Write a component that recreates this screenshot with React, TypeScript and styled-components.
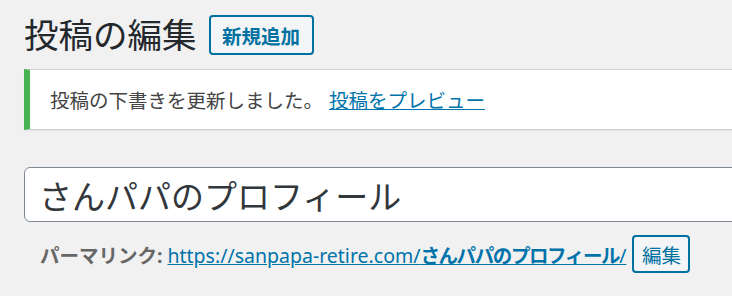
import React from 'react'
import styled, { createGlobalStyle } from 'styled-components'

const GlobalStyle = createGlobalStyle`
    html, body {
        margin: 0;
        padding: 0;
        background: #f1f1f1;
        overflow: hidden;
    }
    body {
        font-family: 'Noto Sans', 'Noto Sans CJK JP', sans-serif;
        color: #444;
    }
`

const Wrap = styled.div`
    padding: 15px 0 0 24px;
    margin-right: -60px;
`

const HeadingRow = styled.div`
    display: flex;
    align-items: center;
    gap: 12px;
`

const PageTitle = styled.h1`
    margin: 0;
    font-size: 34.5px;
    font-weight: 400;
    line-height: 40px;
    color: #23282d;
`

const TitleAction = styled.a`
    display: inline-flex;
    align-items: center;
    justify-content: center;
    box-sizing: border-box;
    height: 40px;
    width: 105px;
    border: 2px solid #0071a1;
    border-radius: 4px;
    background: #f3f5f6;
    color: #0071a1;
    font-size: 19.5px;
    font-weight: 700;
    text-decoration: none;
`

const Notice = styled.div`
    box-sizing: border-box;
    margin-top: 14px;
    height: 61px;
    display: flex;
    align-items: center;
    padding-left: 20px;
    background: #fff;
    border: 1.5px solid #ccd0d4;
    border-left: 6px solid #46b450;
    box-shadow: 0 1.5px 1.5px rgba(0, 0, 0, 0.04);
    font-size: 19.5px;
`

const NoticeLink = styled.a`
    margin-left: 6px;
    color: #0073aa;
    text-decoration: underline;
`

const TitleInput = styled.div`
    box-sizing: border-box;
    margin-top: 37px;
    height: 55px;
    display: flex;
    align-items: center;
    padding: 0 14px;
    background: #fff;
    border: 1.5px solid #7e8993;
    border-radius: 6px;
    font-size: 33px;
    color: #32373c;
`

const PermalinkRow = styled.div`
    display: flex;
    align-items: center;
    margin-top: 13px;
    padding-left: 16px;
    font-size: 19.5px;
    color: #666;
`

const PermalinkLabel = styled.strong`
    font-weight: 700;
    margin-right: 5px;
`

const PermalinkUrl = styled.a`
    color: #0073aa;
    text-decoration: underline;
`

const Slug = styled.span`
    font-weight: 700;
    letter-spacing: -1.4px;
`

const SmallButton = styled.button`
    box-sizing: border-box;
    margin-left: 6px;
    height: 38px;
    width: 58px;
    padding: 0;
    border: 2px solid #0071a1;
    border-radius: 4px;
    background: #f3f5f6;
    color: #0071a1;
    font-family: inherit;
    font-size: 19.5px;
`

export default function App() {
    return (
        <>
            <GlobalStyle />
            <Wrap>
                <HeadingRow>
                    <PageTitle>投稿の編集</PageTitle>
                    <TitleAction href="#">新規追加</TitleAction>
                </HeadingRow>
                <Notice>
                    投稿の下書きを更新しました。
                    <NoticeLink href="#">投稿をプレビュー</NoticeLink>
                </Notice>
                <TitleInput>さんパパのプロフィール</TitleInput>
                <PermalinkRow>
                    <PermalinkLabel>パーマリンク:</PermalinkLabel>
                    <PermalinkUrl href="#">
                        https://sanpapa-retire.com/<Slug>さんパパのプロフィール</Slug>/
                    </PermalinkUrl>
                    <SmallButton>編集</SmallButton>
                </PermalinkRow>
            </Wrap>
        </>
    )
}
